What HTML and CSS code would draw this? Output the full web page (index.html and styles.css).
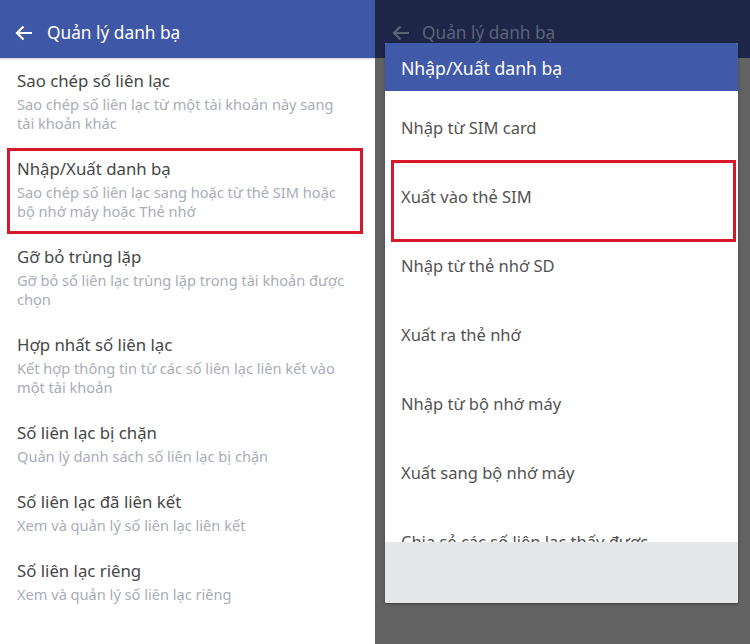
FILE: index.html
```html
<!DOCTYPE html>
<html lang="vi">
<head>
<meta charset="utf-8">
<title>Quản lý danh bạ</title>
<link rel="stylesheet" href="styles.css">
</head>
<body>
<div class="page">
  <section class="panel left">
    <header class="appbar">
      <svg class="back" viewBox="0 0 18 16" width="18" height="16"><path d="M17 8H2M8.5 1.5L2 8l6.5 6.5" fill="none" stroke="currentColor" stroke-width="2.2"/></svg>
      <span class="appbar-title">Quản lý danh bạ</span>
    </header>
    <ul class="settings">
      <li class="item"><div class="t">Sao chép số liên lạc</div><div class="s">Sao chép số liên lạc từ một tài khoản này sang tài khoản khác</div></li>
      <li class="item hl"><div class="t">Nhập/Xuất danh bạ</div><div class="s">Sao chép số liên lạc sang hoặc từ thẻ SIM hoặc bộ nhớ máy hoặc Thẻ nhớ</div></li>
      <li class="item"><div class="t">Gỡ bỏ trùng lặp</div><div class="s">Gỡ bỏ số liên lạc trùng lặp trong tài khoản được chọn</div></li>
      <li class="item"><div class="t">Hợp nhất số liên lạc</div><div class="s">Kết hợp thông tin từ các số liên lạc liên kết vào một tài khoản</div></li>
      <li class="item"><div class="t">Số liên lạc bị chặn</div><div class="s">Quản lý danh sách số liên lạc bị chặn</div></li>
      <li class="item"><div class="t">Số liên lạc đã liên kết</div><div class="s">Xem và quản lý số liên lạc liên kết</div></li>
      <li class="item"><div class="t">Số liên lạc riêng</div><div class="s">Xem và quản lý số liên lạc riêng</div></li>
    </ul>
  </section>
  <section class="panel right">
    <header class="appbar dim">
      <svg class="back" viewBox="0 0 18 16" width="18" height="16"><path d="M17 8H2M8.5 1.5L2 8l6.5 6.5" fill="none" stroke="currentColor" stroke-width="2.2"/></svg>
      <span class="appbar-title">Quản lý danh bạ</span>
    </header>
    <div class="scrim"></div>
    <div class="dialog">
      <div class="dlg-head">Nhập/Xuất danh bạ</div>
      <ul class="dlg-list">
        <li class="opt">Nhập từ SIM card</li>
        <li class="opt hl2">Xuất vào thẻ SIM</li>
        <li class="opt">Nhập từ thẻ nhớ SD</li>
        <li class="opt">Xuất ra thẻ nhớ</li>
        <li class="opt">Nhập từ bộ nhớ máy</li>
        <li class="opt">Xuất sang bộ nhớ máy</li>
        <li class="opt">Chia sẻ các số liên lạc thấy được</li>
      </ul>
      <div class="dlg-foot"></div>
    </div>
  </section>
</div>
</body>
</html>
```
FILE: styles.css
```css
* { box-sizing: border-box; }
html, body { margin: 0; padding: 0; }
body {
  font-family: "Noto Sans", "Open Sans", Roboto, "Liberation Sans", sans-serif;
  background: #fff;
  width: 750px;
  height: 644px;
  overflow: hidden;
}
.page { display: flex; width: 750px; height: 644px; }
.panel { width: 375px; height: 644px; position: relative; display: flex; flex-direction: column; }
.left { background: #fff; }
.appbar {
  height: 58px;
  background: #3f57a7;
  color: #fff;
  display: flex;
  align-items: center;
  padding: 6px 0 0 15px;
  box-shadow: 0 1px 2px rgba(0,0,0,0.2);
  flex: none;
}
.back { flex: none; margin-top: 2px; }
.appbar-title { font-size: 17.3px; margin-left: 14px; padding-top: 1px; }
.settings { list-style: none; margin: 0; padding: 0; }
.item { padding: 9px 28px 13px 17px; position: relative; }
.t { font-size: 16.8px; line-height: 28px; color: #474747; }
.s { font-size: 14.6px; line-height: 19px; color: #a9adb7; }
.hl::after {
  content: "";
  position: absolute;
  left: 7px; right: 12px; top: 2px; bottom: 0;
  border: 3px solid #d8172b;
}
.right { background: #626262; }
.appbar.dim { background: #1d2647; color: #5c6379; box-shadow: none; padding-left: 17px; }
.appbar.dim .appbar-title { margin-left: 12px; }
.scrim { flex: 1; background: #626262; }
.dialog {
  position: absolute;
  left: 10px; top: 43px;
  width: 353px; height: 560px;
  background: #fff;
  border-radius: 2px;
  overflow: hidden;
  display: flex;
  flex-direction: column;
  box-shadow: 0 1px 3px rgba(0,0,0,0.35);
}
.dlg-head {
  height: 48px;
  flex: none;
  background: #4159a9;
  color: #fff;
  font-size: 17.6px;
  display: flex;
  align-items: center;
  padding-left: 16px;
  padding-top: 2px;
}
.dlg-list { list-style: none; margin: 0; padding: 2px 0 0; flex: 1; overflow: hidden; }
.opt {
  height: 69px;
  line-height: 69px;
  padding-left: 16px;
  font-size: 16.5px;
  color: #525252;
  position: relative;
  white-space: nowrap;
}
.hl2::after {
  content: "";
  position: absolute;
  left: 6px; right: 2px; top: -2px; bottom: -11px;
  border: 3px solid #d8172b;
}
.dlg-foot { height: 61px; flex: none; background: #e5e7e9; }
```
